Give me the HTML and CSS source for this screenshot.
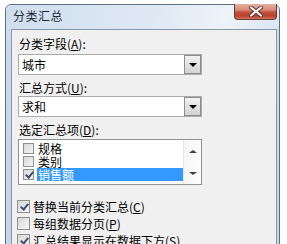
FILE: index.html
```html
<!DOCTYPE html>
<html lang="zh-CN">
<head>
  <meta charset="UTF-8">
  <meta name="viewport" content="width=device-width, initial-scale=1.0">
  <title>分类汇总</title>
  <link rel="stylesheet" href="styles.css">
</head>
<body>
  <div class="window">
    <div class="titlebar">
      <span class="title">分类汇总</span>
      <div class="close-btn">
        <svg width="14" height="11" viewBox="0 0 14 11">
          <path d="M2 1.5 L12 9.5 M12 1.5 L2 9.5" stroke="#5a2a24" stroke-width="4" stroke-linecap="round"/>
          <path d="M2 1.5 L12 9.5 M12 1.5 L2 9.5" stroke="#fff" stroke-width="2.2" stroke-linecap="round"/>
        </svg>
      </div>
    </div>

    <div class="client">
      <div class="field-label first">分类字段(<u>A</u>):</div>
      <div class="combo">
        <span class="combo-text">城市</span>
        <span class="combo-btn"><span class="arrow-down"></span></span>
      </div>

      <div class="field-label">汇总方式(<u>U</u>):</div>
      <div class="combo combo-2">
        <span class="combo-text">求和</span>
        <span class="combo-btn"><span class="arrow-down"></span></span>
      </div>

      <div class="field-label">选定汇总项(<u>D</u>):</div>
      <div class="listbox">
        <ul class="list-items">
          <li class="list-item"><span class="chk small"></span><span class="item-text">规格</span></li>
          <li class="list-item"><span class="chk small"></span><span class="item-text">类别</span></li>
          <li class="list-item"><span class="chk small checked"></span><span class="item-text selected">销售额</span></li>
        </ul>
        <div class="scrollbar">
          <span class="arrow-up"></span>
          <span class="arrow-down small-arrow"></span>
        </div>
      </div>

      <div class="options">
        <div class="option"><span class="chk checked"></span>替换当前分类汇总(<u>C</u>)</div>
        <div class="option"><span class="chk"></span>每组数据分页(<u>P</u>)</div>
        <div class="option"><span class="chk checked"></span>汇总结果显示在数据下方(<u>S</u>)</div>
      </div>
    </div>
  </div>
</body>
</html>
```

FILE: styles.css
```css
html, body {
  margin: 0;
  padding: 0;
  height: 244px;
  overflow: hidden;
  background-color: #fff;
}
body {
  font-family: "Noto Sans CJK SC", "Liberation Sans", sans-serif;
  font-size: 12px;
  color: #000;
}
u {
  text-decoration: underline;
  text-underline-offset: 1px;
}
.window {
  margin: 4px 0 0 5px;
  width: 273px;
  height: 260px;
  border: 1px solid #5f6f82;
  border-radius: 6px 6px 0 0;
  background: linear-gradient(to bottom, #dbe7f3, #c6d9ed 40px, #c3d6eb);
  display: flex;
  flex-direction: column;
}
.titlebar {
  height: 24px;
  display: flex;
  justify-content: space-between;
  align-items: flex-start;
  background: linear-gradient(100deg, #cfdeee 0%, #dfe9f4 55%, #eef3f9 80%, #d9e6f3 100%);
  border-radius: 5px 5px 0 0;
}
.title {
  padding: 4px 0 0 7px;
  line-height: 14px;
  font-size: 12px;
  letter-spacing: 0.5px;
  color: #1e2a38;
}
.close-btn {
  width: 41px;
  height: 15px;
  margin: -1px 2px 0 0;
  border: 1px solid #6a3a34;
  border-top: none;
  border-radius: 0 0 4px 4px;
  background: linear-gradient(to bottom, #e8b0a2 0%, #d68a78 40%, #c0503c 55%, #b8432f 80%, #d2745f 100%);
  display: flex;
  justify-content: center;
  align-items: center;
}
.client {
  flex: 1;
  margin: 0 2px 0 5px;
  border: 1px solid #8797aa;
  border-bottom: none;
  background-color: #f0f0f0;
  padding: 7px 0 0 6px;
}
.field-label {
  height: 14px;
  line-height: 14px;
  padding-left: 1px;
  margin-top: 6px;
}
.field-label.first {
  margin-top: 0;
}
.combo {
  margin-top: 3px;
  width: 182px;
  height: 19px;
  border: 1px solid #a9abad;
  background-color: #fff;
  display: flex;
  justify-content: space-between;
}
.combo-2 {
  margin-top: 1px;
}
.combo + .field-label {
  margin-top: 6px;
}
.combo-text {
  padding-left: 3px;
  line-height: 19px;
}
.combo-btn {
  width: 15px;
  height: 17px;
  margin: 0;
  border: 1px solid #8d8d8d;
  background: linear-gradient(to bottom, #f3f3f3, #e2e2e2 50%, #d3d3d3);
  display: flex;
  justify-content: center;
  align-items: center;
}
.arrow-down {
  width: 0;
  height: 0;
  border-left: 4px solid transparent;
  border-right: 4px solid transparent;
  border-top: 4px solid #000;
}
.arrow-up {
  width: 0;
  height: 0;
  border-left: 4px solid transparent;
  border-right: 4px solid transparent;
  border-bottom: 3px solid #404040;
}
.small-arrow {
  border-top: 3px solid #404040;
}
.listbox {
  margin-top: 2px;
  width: 182px;
  height: 44px;
  border: 1px solid #8f9296;
  background-color: #fff;
  display: flex;
}
.list-items {
  list-style: none;
  margin: 0;
  padding: 2px 0 0 0;
  flex: 1;
}
.list-item {
  height: 13px;
  display: flex;
  align-items: center;
}
.item-text {
  line-height: 13px;
  padding-left: 1px;
  flex: 1;
}
.item-text.selected {
  background-color: #3399ff;
  color: #fff;
}
.scrollbar {
  width: 17px;
  border-left: 1px solid #e6e6e6;
  background: linear-gradient(to right, #f6f6f6, #fdfdfd);
  display: flex;
  flex-direction: column;
  justify-content: space-between;
  align-items: center;
  padding: 10px 0 9px 0;
}
.chk {
  width: 11px;
  height: 11px;
  border: 1px solid #8e8f8f;
  background: linear-gradient(135deg, #d8d8d8, #f6f6f6);
  box-sizing: border-box;
  margin-right: 4px;
  flex-shrink: 0;
  position: relative;
}
.chk.small {
  width: 11px;
  height: 11px;
  margin: 0 3px 0 4px;
}
.chk.checked::after {
  content: "";
  position: absolute;
  left: 3px;
  top: 0px;
  width: 3px;
  height: 6px;
  border-right: 2px solid #3a4d74;
  border-bottom: 2px solid #3a4d74;
  transform: rotate(40deg);
}
.options {
  margin-top: 13px;
}
.option {
  height: 17px;
  display: flex;
  align-items: center;
  margin-left: -1px;
}
.option .chk {
  width: 13px;
  height: 13px;
  margin-right: 3px;
}
.option .chk.checked::after {
  left: 4px;
  top: 1px;
}
```
